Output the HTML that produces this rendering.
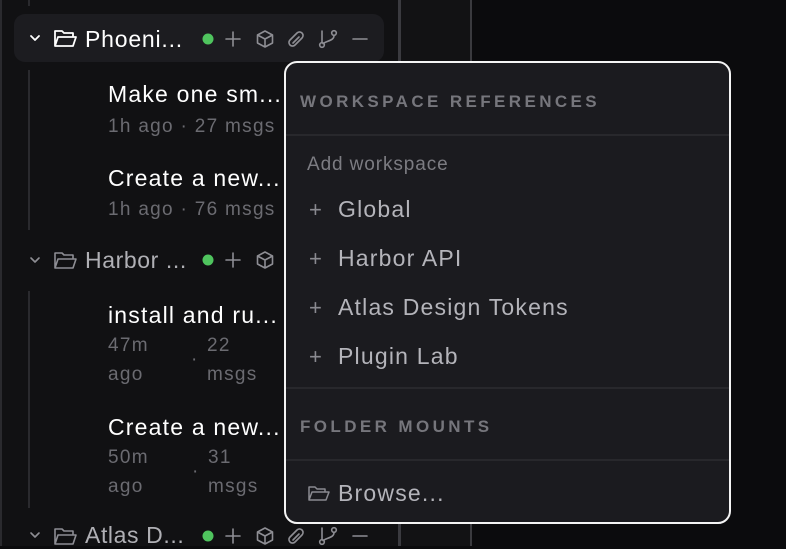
<!DOCTYPE html>
<html><head><meta charset="utf-8"><style>
*{margin:0;padding:0;box-sizing:border-box}
body{width:786px;height:546px;overflow:hidden;background:#0b0b0d;font-family:"Liberation Sans",sans-serif;position:relative}
.abs{position:absolute;white-space:nowrap}
.sb{left:0;top:0;width:398px;height:546px;background:#111113;border-left:2px solid #2a2a2e}
.mid{left:398px;top:0;width:74px;height:546px;background:#121214;border-left:3px solid #3a3a3f;border-right:2px solid #3a3a3e}
.pill{left:14px;top:14px;width:370px;height:48px;background:#1c1c20;border-radius:11px}
.t{font-size:23px;color:#fff;letter-spacing:1.2px}
.m{font-size:19px;color:#6b6b71;letter-spacing:1.3px}
.vl{width:2px;background:#2a2a2e;left:28px}
.pop{left:284px;top:61px;width:447px;height:463px;background:#1b1b1f;border:2px solid #f4f4f4;border-radius:13px;overflow:hidden}
.hd{font-size:17px;font-weight:bold;letter-spacing:3.4px;color:#76767c}
.hr{height:2px;background:#28282c;left:0;width:443px}
.it{font-size:23px;color:#b4b4ba;letter-spacing:1.2px}
.pl{font-size:22px;color:#8a8a90}
svg{position:absolute}
</style></head><body>
<div class="abs sb"></div>
<div class="abs mid"></div>
<div class="abs vl" style="top:0;height:6px"></div>
<div class="abs pill"></div>

<svg width="786" height="546" style="left:0;top:0" fill="none" stroke-linecap="round" stroke-linejoin="round">
 <g stroke="#fff" stroke-width="1.8">
  <path d="M31 36l4 4 4-4"/>
  <path d="M55 46V31h7l2 2h9v3M55 46l3-9h18l-3 9z"/>
 </g>
 <g stroke="#8e8e94" stroke-width="1.6">
  <path d="M31 258l4 4 4-4"/>
  <path d="M55 268V253h7l2 2h9v3M55 268l3-9h18l-3 9z"/>
  <path d="M31 533l4 4 4-4"/>
  <path d="M55 544V529h7l2 2h9v3M55 544l3-9h18l-3 9z"/>
 </g>
 <g id="ic" stroke="#8e8e94" stroke-width="1.6">
  <circle cx="208" cy="39" r="5.5" fill="#4fc45e" stroke="none"/>
  <path d="M233 32v14M226 39h14"/>
  <path d="M265 31l7.5 4v8l-7.5 4-7.5-4v-8zM257.5 35l7.5 4 7.5-4M265 39v8"/>
  <path d="M294 36l-4 4a3.5 3.5 0 0 0 5 5l4-4M298 42l4-4a3.5 3.5 0 0 0-5-5l-4 4M293 43l6-6"/>
  <circle cx="322" cy="45" r="2.3"/><circle cx="334" cy="33" r="2.3"/><path d="M322 31v11.5M334 35.5c0 5-6 5-11 8"/>
  <path d="M353 39h14"/>
 </g>
 <use href="#ic" y="221"/>
 <use href="#ic" y="497"/>
</svg>
<div class="abs t" style="left:85px;top:26px;letter-spacing:.8px">Phoeni...</div>
<div class="abs t" style="left:85px;top:247px;color:#b0b0b5;letter-spacing:.6px">Harbor ...</div>
<div class="abs t" style="left:85px;top:522px;color:#b0b0b5;letter-spacing:.6px">Atlas D...</div>

<div class="abs vl" style="top:70px;height:160px"></div>
<div class="abs vl" style="top:291px;height:217px"></div>

<div class="abs t" style="left:108px;top:81px">Make one sm...</div>
<div class="abs m" style="left:108px;top:116px">1h ago · 27 msgs</div>
<div class="abs t" style="left:108px;top:165px">Create a new...</div>
<div class="abs m" style="left:108px;top:199px">1h ago · 76 msgs</div>
<div class="abs t" style="left:108px;top:302px">install and ru...</div>
<div class="abs m" style="left:108px;top:335px">47m</div>
<div class="abs m" style="left:108px;top:364px">ago</div>
<div class="abs m" style="left:191px;top:349px">·</div>
<div class="abs m" style="left:207px;top:335px">22</div>
<div class="abs m" style="left:207px;top:364px">msgs</div>
<div class="abs t" style="left:108px;top:414px">Create a new...</div>
<div class="abs m" style="left:108px;top:447px">50m</div>
<div class="abs m" style="left:108px;top:476px">ago</div>
<div class="abs m" style="left:192px;top:461px">·</div>
<div class="abs m" style="left:208px;top:447px">31</div>
<div class="abs m" style="left:208px;top:476px">msgs</div>

<div class="abs pop">
 <div class="abs hd" style="left:14px;top:29px">WORKSPACE REFERENCES</div>
 <div class="abs hr" style="top:71px"></div>
 <div class="abs" style="left:21px;top:91px;font-size:19px;color:#7c7c82;letter-spacing:.9px">Add workspace</div>
 <div class="abs pl" style="left:23px;top:134px">+</div><div class="abs it" style="left:52px;top:133px">Global</div>
 <div class="abs pl" style="left:23px;top:183px">+</div><div class="abs it" style="left:52px;top:182px">Harbor API</div>
 <div class="abs pl" style="left:23px;top:232px">+</div><div class="abs it" style="left:52px;top:231px">Atlas Design Tokens</div>
 <div class="abs pl" style="left:23px;top:281px">+</div><div class="abs it" style="left:52px;top:280px">Plugin Lab</div>
 <div class="abs hr" style="top:324px"></div>
 <div class="abs hd" style="left:14px;top:354px">FOLDER MOUNTS</div>
 <div class="abs hr" style="top:396px"></div>
 <svg width="24" height="20" style="left:21px;top:421px" fill="none" stroke="#8a8a90" stroke-width="1.5" stroke-linejoin="round"><path d="M2 16V3h6l2 2h8v3M2 16l3-8h17l-3 8z"/></svg>
 <div class="abs it" style="left:52px;top:417px">Browse...</div>
</div>
</body></html>
